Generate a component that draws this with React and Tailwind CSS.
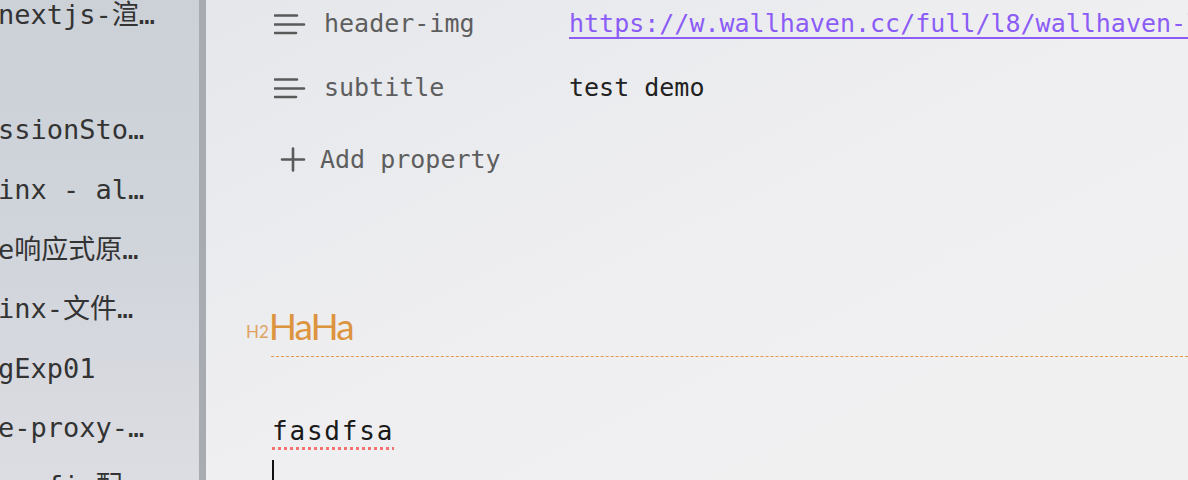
import React from 'react';

const mono = { fontFamily: '"DejaVu Sans Mono", "Noto Sans CJK SC", monospace' };

const sideItems = [
  { text: 'nextjs-渲…', h: 'h-[58px]' },
  { text: '', h: 'h-[57px]' },
  { text: 'ssionSto…', h: 'h-[59px]' },
  { text: 'inx - al…', h: 'h-[60px]' },
  { text: 'e响应式原…', h: 'h-[60px]' },
  { text: 'inx-文件…', h: 'h-[59px]' },
  { text: 'gExp01', h: 'h-[61px]' },
  { text: 'e-proxy-…', h: 'h-[56px]' },
  { text: 'config配', h: 'h-[60px]' },
];

const LinesIcon = () => (
  <svg width="32" height="24" viewBox="0 0 32 24" className="shrink-0">
    <path d="M1 3.5h22M1 12.5h29M1 21h21" stroke="#5a5a5a" strokeWidth="2.6" strokeLinecap="round" />
  </svg>
);

const PropertyRow = ({ label, children, className = '' }) => (
  <div className={`flex items-center h-[48px] ${className}`}>
    <div className="w-[50px] ml-[2px] flex items-center">
      <LinesIcon />
    </div>
    <div className="w-[245px] text-[25px] text-[#5e5e5e]">{label}</div>
    <div className="flex-1 min-w-0 whitespace-nowrap overflow-hidden text-[25px]">{children}</div>
  </div>
);

export default function App() {
  return (
    <div className="flex h-[480px] w-[1188px] overflow-hidden" style={mono}>
      {/* sidebar, scrolled horizontally so titles are cut on the left */}
      <aside className="w-[199px] shrink-0 overflow-hidden bg-gradient-to-b from-[#ccd1d8] via-[#d0d4db] to-[#dcdde2]">
        <div className="-mt-[14px] flex flex-col">
          {sideItems.map((item, i) => (
            <div key={i} className={`${item.h} flex items-center whitespace-nowrap text-[27px] text-[#333] -ml-[2px]`}>
              {item.text}
            </div>
          ))}
        </div>
      </aside>

      <div className="w-[7px] shrink-0 bg-[#a8abb0]" />

      <main className="flex-1 min-w-0 overflow-hidden bg-gradient-to-br from-[#e5e7eb] via-[#efeff1] to-[#f1f0f1]">
        <div className="pl-[66px]">
          <PropertyRow label="header-img">
            <span className="text-[#8b5cf6] underline underline-offset-[5px] decoration-[2px]">
              https://w.wallhaven.cc/full/l8/wallhaven-l8vp7y.jpg
            </span>
          </PropertyRow>
          <PropertyRow label="subtitle" className="mt-[16px]">
            <span className="text-[#222]">test demo</span>
          </PropertyRow>

          <div className="flex items-center h-[48px] mt-[24px]">
            <svg width="26" height="26" viewBox="0 0 26 26" className="ml-[8px] shrink-0">
              <path d="M13 1.5v22M2 12.5h22" stroke="#5a5a5a" strokeWidth="2.6" strokeLinecap="round" />
            </svg>
            <span className="ml-[14px] text-[25px] text-[#5e5e5e]">Add property</span>
          </div>

          <div className="mt-[116px] flex items-end -ml-[26px] h-[44px]" style={{ fontFamily: 'Lato, sans-serif' }}>
            <span className="text-[17px] leading-none text-[#e0a262] mb-[4px]">H2</span>
            <span className="text-[37px] leading-none tracking-[-2px] text-[#dd943f]">HaHa</span>
          </div>
          <div className="mt-[12px] border-t border-dashed border-[#e39a4a] ml-[-1px]" />

          <div className="mt-[54px] h-[40px] flex items-center">
            <span className="text-[26px] tracking-[1.8px] text-[#1a1a1a] underline decoration-dotted decoration-[#f87171] decoration-[3px] underline-offset-[7px]">
              fasdfsa
            </span>
          </div>
          <div className="mt-[9px] w-[2px] h-[26px] bg-[#111]" />
        </div>
      </main>
    </div>
  );
}
